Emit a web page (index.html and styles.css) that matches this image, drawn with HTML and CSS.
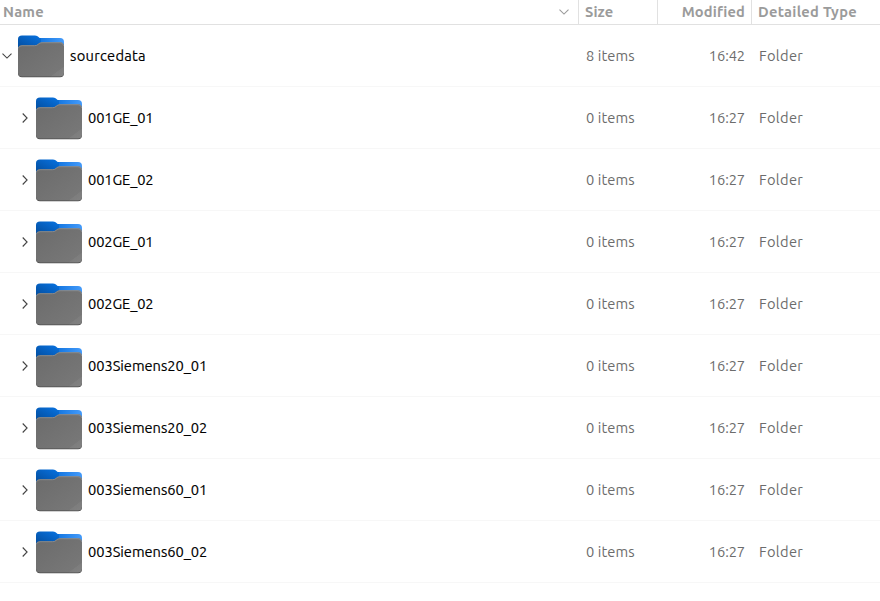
FILE: index.html
```
<!DOCTYPE html>
<html lang="en">
<head>
<meta charset="utf-8">
<title>sourcedata</title>
<link rel="stylesheet" href="styles.css">
</head>
<body>
<svg class="defs" width="0" height="0" aria-hidden="true">
  <defs>
    <linearGradient id="back" x1="0" y1="0" x2="1" y2="0"><stop offset="0" stop-color="#0759b5"/><stop offset=".5" stop-color="#1678e2"/><stop offset="1" stop-color="#459bfa"/></linearGradient>
    <linearGradient id="tab" x1="0" y1="1" x2="1" y2="0"><stop offset="0" stop-color="#034e9f"/><stop offset="1" stop-color="#0873e2"/></linearGradient>
    <linearGradient id="front" x1="0" y1="0" x2="1" y2="1"><stop offset="0" stop-color="#6b6b6b"/><stop offset=".85" stop-color="#777"/><stop offset=".86" stop-color="#7d7d7d"/><stop offset="1" stop-color="#828282"/></linearGradient>
  </defs>
  <symbol id="folder" viewBox="0 0 46 43">
    <path fill="url(#back)" d="M0 7Q0 3 4 3H42Q46 3 46 7V36H0Z"/>
    <path fill="url(#tab)" d="M0 4Q0 .4 4 .4H17Q19.500.4 20.500 2Q21.500 3.300 23 3.300V10L20 12H0Z"/>
    <path fill="#4c4c4c" d="M0 15H46V38.300Q46 42.300 42 42.300H4Q0 42.300 0 38.300Z"/>
    <path fill="url(#front)" d="M0 14.300Q0 10.300 4 10.300H16.500Q19 10.300 20.200 8.800Q21.500 7.300 24 7.300H42Q46 7.300 46 11.300V37.500Q46 41.500 42 41.500H4Q0 41.500 0 37.500Z"/>
    <path fill="none" stroke="#919191" stroke-width=".8" d="M.4 13.300Q.7 10.700 4 10.700H16.500Q19 10.700 20.400 9.200Q21.700 7.700 24 7.700H42Q45.300 7.700 45.600 10.800"/>
  </symbol>
  <symbol id="down" viewBox="0 0 10 6"><path d="M.5.7 5 5.100 9.500.7" fill="none" stroke="currentColor" stroke-width="1.100"/></symbol>
  <symbol id="right" viewBox="0 0 6 10"><path d="M.7.5 5.100 5 .7 9.500" fill="none" stroke="currentColor" stroke-width="1.100"/></symbol>
</svg>
<main class="files">
  <div class="grid header">
    <div class="name-head"><span class="h-name">Name</span><svg class="sort"><use href="#down"/></svg></div>
    <div class="h-size">Size</div>
    <div class="h-modified">Modified</div>
    <div class="h-type">Detailed Type</div>
  </div>
  <div class="grid row root"><div class="entry"><svg class="open"><use href="#down"/></svg><svg class="folder"><use href="#folder"/></svg><span class="source">sourcedata</span></div><div class="size">8 items</div><div class="time">16:42</div><div class="type">Folder</div></div>
  <div class="grid row"><div class="entry"><svg class="closed"><use href="#right"/></svg><svg class="folder"><use href="#folder"/></svg><span class="ge">001GE_01</span></div><div class="size">0 items</div><div class="time">16:27</div><div class="type">Folder</div></div>
  <div class="grid row"><div class="entry"><svg class="closed"><use href="#right"/></svg><svg class="folder"><use href="#folder"/></svg><span class="ge">001GE_02</span></div><div class="size">0 items</div><div class="time">16:27</div><div class="type">Folder</div></div>
  <div class="grid row"><div class="entry"><svg class="closed"><use href="#right"/></svg><svg class="folder"><use href="#folder"/></svg><span class="ge">002GE_01</span></div><div class="size">0 items</div><div class="time">16:27</div><div class="type">Folder</div></div>
  <div class="grid row"><div class="entry"><svg class="closed"><use href="#right"/></svg><svg class="folder"><use href="#folder"/></svg><span class="ge">002GE_02</span></div><div class="size">0 items</div><div class="time">16:27</div><div class="type">Folder</div></div>
  <div class="grid row"><div class="entry"><svg class="closed"><use href="#right"/></svg><svg class="folder"><use href="#folder"/></svg><span class="siemens">003Siemens20_01</span></div><div class="size">0 items</div><div class="time">16:27</div><div class="type">Folder</div></div>
  <div class="grid row"><div class="entry"><svg class="closed"><use href="#right"/></svg><svg class="folder"><use href="#folder"/></svg><span class="siemens">003Siemens20_02</span></div><div class="size">0 items</div><div class="time">16:27</div><div class="type">Folder</div></div>
  <div class="grid row"><div class="entry"><svg class="closed"><use href="#right"/></svg><svg class="folder"><use href="#folder"/></svg><span class="siemens">003Siemens60_01</span></div><div class="size">0 items</div><div class="time">16:27</div><div class="type">Folder</div></div>
  <div class="grid row"><div class="entry"><svg class="closed"><use href="#right"/></svg><svg class="folder"><use href="#folder"/></svg><span class="siemens">003Siemens60_02</span></div><div class="size">0 items</div><div class="time">16:27</div><div class="type">Folder</div></div>
</main>
</body>
</html>
```
FILE: styles.css
```
* { box-sizing: border-box; }
body { margin: 0; background: #fff; overflow: hidden; font: 14.667px/20px Ubuntu, "Noto Sans", sans-serif; color: #000; }
.defs { position: absolute; }
.files { width: 880px; height: 601px; }
.grid { display: grid; grid-template-columns: 579px 79px 94px 128px; white-space: nowrap; }
.header { height: 25px; border-bottom: 1px solid #e1e1e1; color: #9b9b9b; font-weight: 700; }
.header > div { height: 24px; line-height: 24px; border-right: 1px solid #e1e1e1; }
.header > .h-type { border-right: 0; padding-left: 6px; letter-spacing: .28px; }
.name-head { display: flex; align-items: center; justify-content: space-between; padding: 0 9px 0 3px; }
.h-name { letter-spacing: .2px; }
.h-size { padding-left: 6px; letter-spacing: .1px; }
.h-modified { text-align: right; padding-right: 6px; letter-spacing: .12px; }
.sort, .open { width: 10px; height: 6px; flex: none; }
.row { height: 62px; border-bottom: 1px solid #f7f7f7; align-items: center; color: #6c6c6c; }
.entry { display: flex; align-items: center; padding-left: 22px; color: #000; }
.entry span { margin-left: 6px; -webkit-text-stroke: .15px currentColor; }
.root .entry { padding-left: 2px; }
.open { margin-right: 6px; color: #444; }
.closed { width: 6px; height: 10px; margin-right: 8px; color: #444; flex: none; }
.folder { width: 46px; height: 43px; margin-top: 2px; flex: none; }
.source { letter-spacing: .28px; }
.ge { letter-spacing: -.12px; }
.siemens { letter-spacing: -.04px; }
.size { padding-left: 7px; letter-spacing: .08px; }
.time { text-align: right; padding-right: 7px; letter-spacing: -.1px; }
.type { padding-left: 7px; letter-spacing: .3px; }
```
